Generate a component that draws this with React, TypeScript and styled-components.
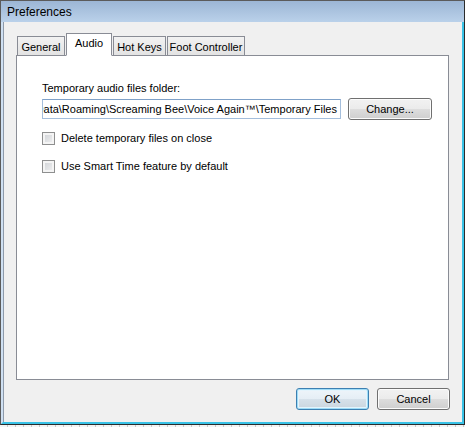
import styled, { createGlobalStyle, css } from 'styled-components';

const GlobalStyle = createGlobalStyle`
  html, body {
    margin: 0;
    padding: 0;
    background: #e6e6e6;
  }
  body {
    width: 465px;
    height: 427px;
    overflow: hidden;
    font-family: "Liberation Sans", Arial, sans-serif;
    font-size: 11px;
    color: #000;
  }
`;

const Desktop = styled.div`
  display: flex;
  flex-direction: column;
  width: 465px;
  height: 427px;
  background: repeating-linear-gradient(90deg, #f4f4f4 0 7px, #c9c9c9 7px 8px);
`;

const Window = styled.div`
  display: flex;
  flex-direction: column;
  width: 465px;
  height: 425px;
  box-sizing: border-box;
  border-top: 1px solid #5b5b5b;
  border-left: 1px solid #5b5b5b;
  border-right: 1px solid #2b2b2b;
  border-bottom: 1px solid #2b2b2b;
  background: #b9d1ea;
`;

const TitleBar = styled.div`
  display: flex;
  align-items: center;
  height: 21px;
  padding-left: 6px;
  background: linear-gradient(#9cb6d5, #bad1ea);
  font-size: 12px;
  color: #000;
`;

const Frame = styled.div`
  flex: 1;
  display: flex;
  border-left: 2px solid #cfe0f2;
  border-right: 2px solid #39c2e6;
  border-bottom: 2px solid #39c2e6;
`;

const Client = styled.div`
  flex: 1;
  display: flex;
  flex-direction: column;
  padding: 12px 12px 10px 12px;
  background: #f0f0f0;
  border-left: 1px solid #8e9aaa;
`;

const TabStrip = styled.div`
  display: flex;
  align-items: flex-end;
  height: 22px;
  padding-left: 1px;
  margin-bottom: -1px;
  position: relative;
  z-index: 1;
`;

const Tab = styled.div<{ $active?: boolean; $width: number }>`
  display: flex;
  align-items: center;
  justify-content: center;
  box-sizing: border-box;
  width: ${(p) => p.$width}px;
  height: 20px;
  margin-right: 1px;
  border: 1px solid #898c95;
  background: linear-gradient(#f2f2f2, #e3e3e3);
  padding-top: 1px;
  ${(p) =>
    p.$active &&
    css`
      height: 23px;
      background: #fff;
      border-bottom-color: #fff;
      padding-top: 0;
      padding-bottom: 3px;
    `}
`;

const Panel = styled.div`
  display: flex;
  flex-direction: column;
  width: 433px;
  height: 325px;
  box-sizing: border-box;
  border: 1px solid #898c95;
  background: #fff;
  padding: 25px 0 0 25px;
`;

const FieldLabel = styled.div`
  height: 16px;
  line-height: 14px;
`;

const FolderRow = styled.div`
  display: flex;
  align-items: center;
  gap: 7px;
  margin-top: 1px;
`;

const PathBox = styled.div`
  display: flex;
  justify-content: flex-end;
  align-items: center;
  box-sizing: border-box;
  width: 299px;
  height: 20px;
  padding: 0 3px 0 2px;
  overflow: hidden;
  white-space: nowrap;
  border: 1px solid #a4bedc;
  border-top-color: #7fa1c8;
  background: #fff;
`;

const Button = styled.div<{ $default?: boolean; $width: number }>`
  display: flex;
  align-items: center;
  justify-content: center;
  box-sizing: border-box;
  width: ${(p) => p.$width}px;
  height: 22px;
  border: 1px solid #707070;
  border-radius: 3px;
  background: linear-gradient(#f2f2f2 0%, #ebebeb 50%, #dddddd 51%, #cfcfcf 100%);
  box-shadow: inset 0 0 0 1px #fcfcfc;
  ${(p) =>
    p.$default &&
    css`
      border-color: #3c7fb1;
      box-shadow: inset 0 0 0 1px #9fdcf7, inset 0 0 0 2px #e4f4fc;
      background: linear-gradient(#eef5fa 0%, #e5eef5 50%, #d6e1ea 51%, #cad5de 100%);
    `}
`;

const CheckRow = styled.div<{ $top: number }>`
  display: flex;
  align-items: center;
  gap: 6px;
  margin-top: ${(p) => p.$top}px;
  height: 14px;
`;

const CheckBox = styled.div`
  width: 13px;
  height: 13px;
  box-sizing: border-box;
  border: 1px solid #8e8f8f;
  background: linear-gradient(135deg, #cdd0d4, #f2f2f3);
  box-shadow: inset 0 0 0 2px #f4f4f4;
`;

const ButtonRow = styled.div`
  display: flex;
  justify-content: flex-end;
  gap: 8px;
  margin-top: 8px;
  width: 434px;
`;

export default function App() {
  return (
    <>
      <GlobalStyle />
      <Desktop>
        <Window>
          <TitleBar>Preferences</TitleBar>
          <Frame>
            <Client>
              <TabStrip>
                <Tab $width={48}>General</Tab>
                <Tab $width={46} $active>
                  Audio
                </Tab>
                <Tab $width={53}>Hot Keys</Tab>
                <Tab $width={78}>Foot Controller</Tab>
              </TabStrip>
              <Panel>
                <FieldLabel>Temporary audio files folder:</FieldLabel>
                <FolderRow>
                  <PathBox>
                    <span>C:\Users\User\AppData\Roaming\Screaming Bee\Voice Again™\Temporary Files</span>
                  </PathBox>
                  <Button $width={84}>Change...</Button>
                </FolderRow>
                <CheckRow $top={11}>
                  <CheckBox />
                  <span>Delete temporary files on close</span>
                </CheckRow>
                <CheckRow $top={14}>
                  <CheckBox />
                  <span>Use Smart Time feature by default</span>
                </CheckRow>
              </Panel>
              <ButtonRow>
                <Button $width={73} $default>
                  OK
                </Button>
                <Button $width={73}>Cancel</Button>
              </ButtonRow>
            </Client>
          </Frame>
        </Window>
      </Desktop>
    </>
  );
}
